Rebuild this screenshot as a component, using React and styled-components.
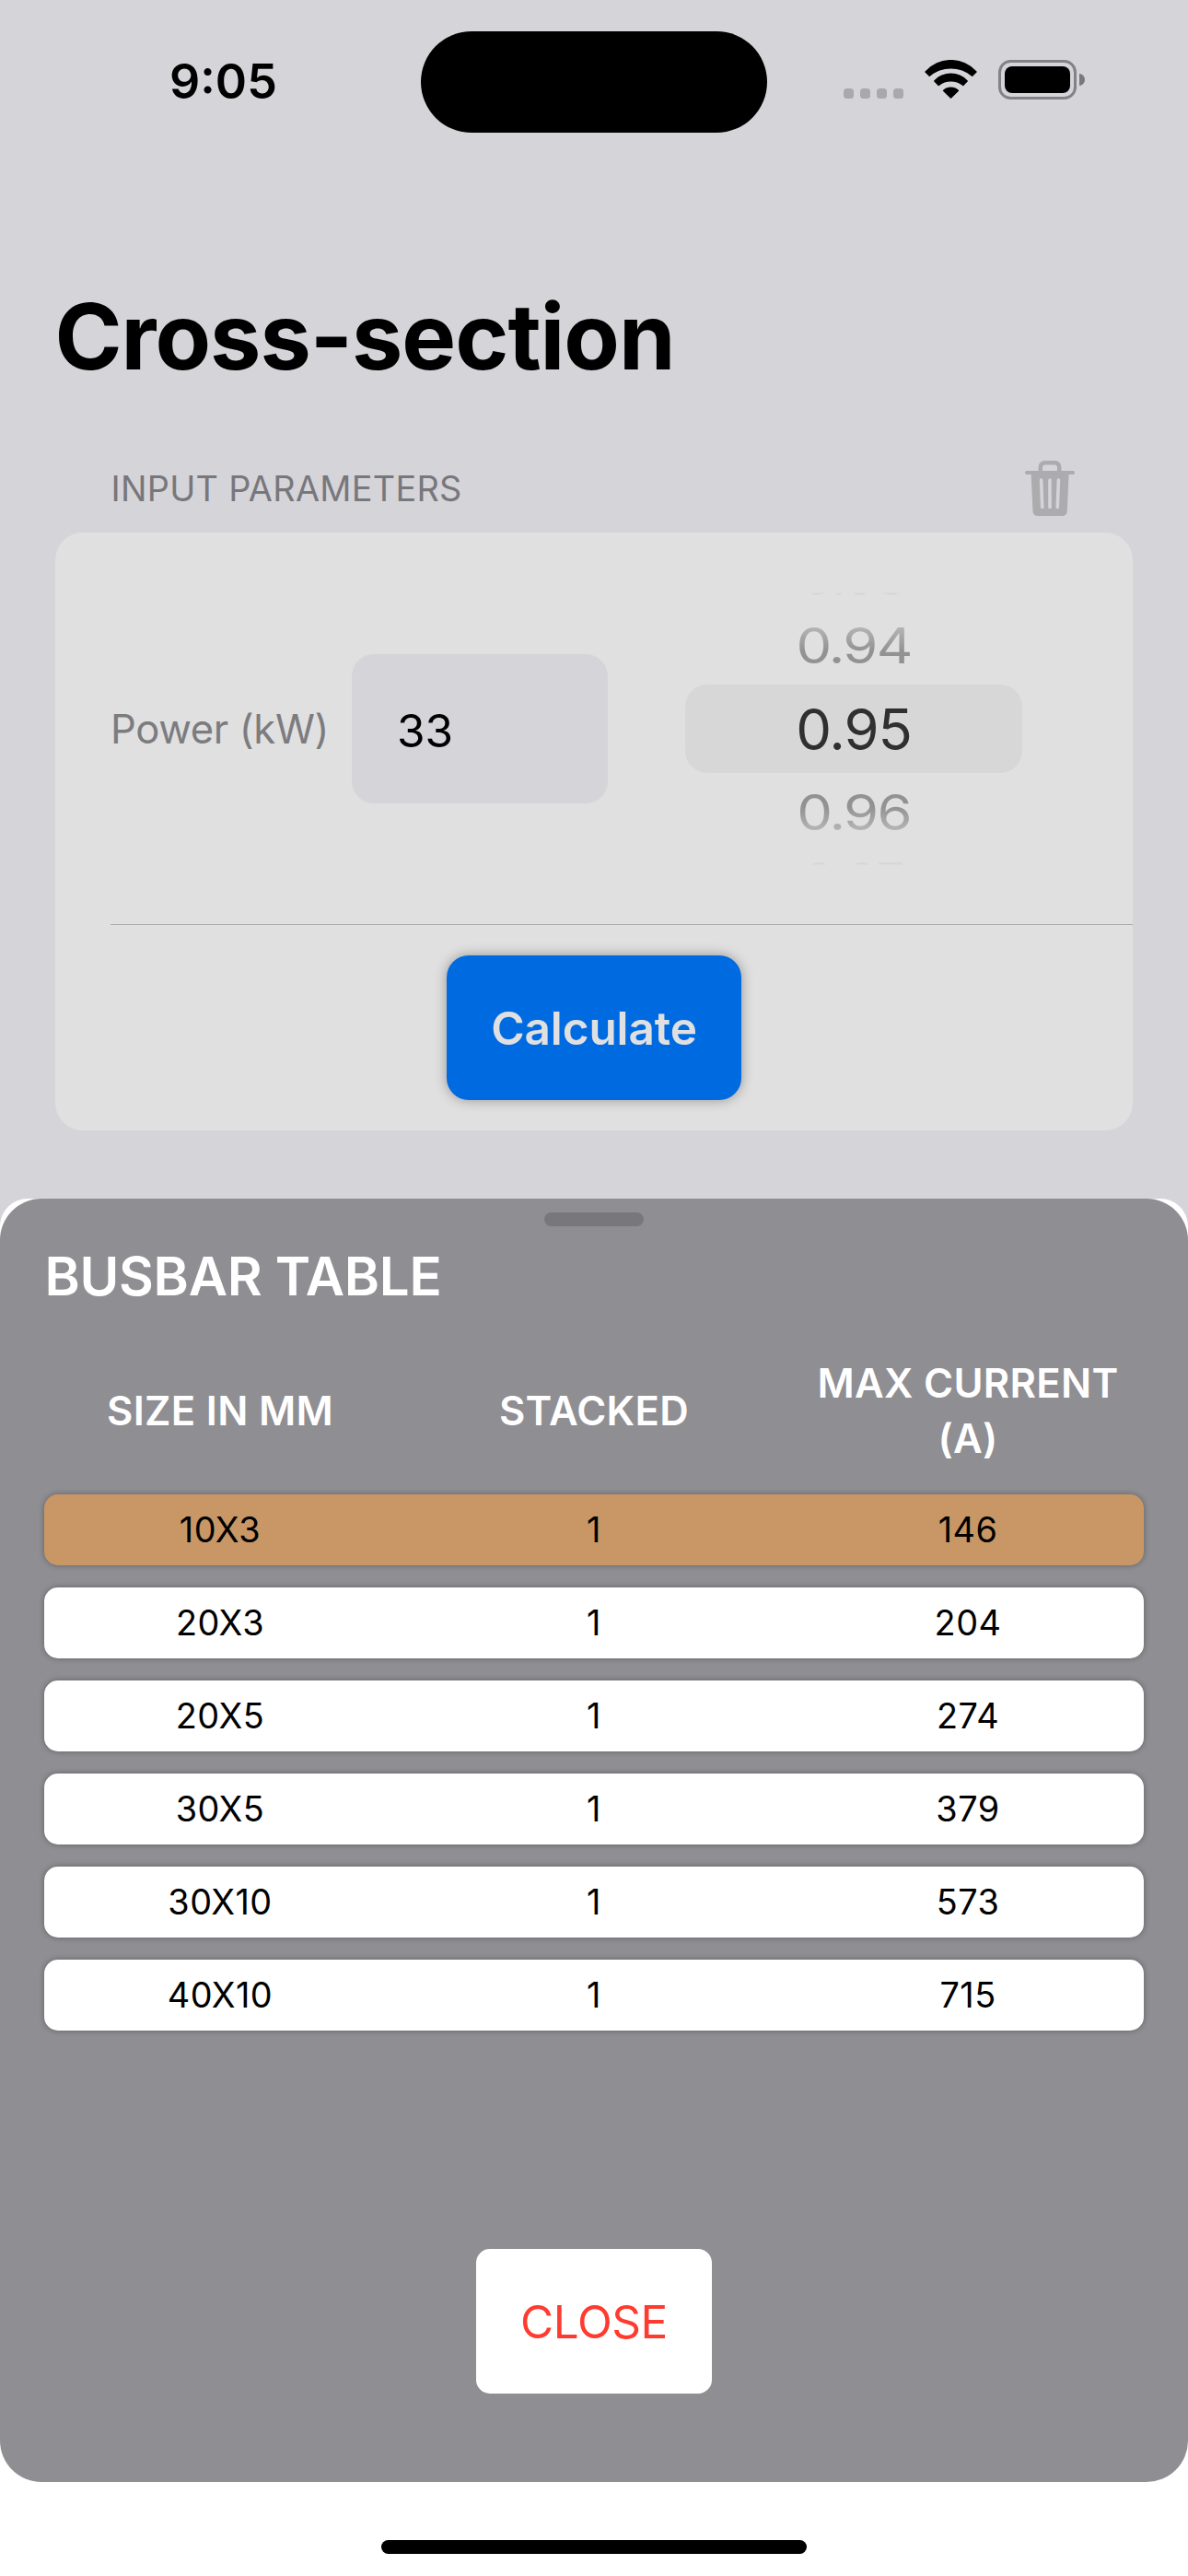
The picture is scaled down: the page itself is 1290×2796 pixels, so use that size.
import React from "react";
import styled, { createGlobalStyle } from "styled-components";

const GlobalStyle = createGlobalStyle`
  * { box-sizing: border-box; }
  body { margin: 0; background: #d5d4d9; }
  button { border: 0; margin: 0; padding: 0; font-family: inherit; }
`;

const Screen = styled.main`
  width: 1290px;
  height: 2796px;
  display: flex;
  flex-direction: column;
  background: #d5d4d9;
  color: #000;
  font-family: Inter, "Liberation Sans", sans-serif;
  white-space: nowrap;
  overflow: hidden;
`;

/* ---------- status bar ---------- */

const StatusBar = styled.header`
  height: 177px;
  flex: none;
  display: grid;
  grid-template-columns: 457px 376px 457px;
`;

const Clock = styled.time`
  padding: 59px 0 0 184px;
  font-size: 52px;
  font-weight: 600;
  line-height: 60px;
`;

const Island = styled.div`
  height: 110px;
  margin-top: 34px;
  border-radius: 55px;
  background: #000;
`;

const StatusIcons = styled.div`
  display: flex;
  align-items: flex-start;
  padding: 65px 0 0 83px;
`;

const SignalDots = styled.div`
  display: flex;
  gap: 7px;
  width: 88px;
  padding-top: 31px;
`;

const Dot = styled.i`
  width: 11px;
  height: 11px;
  border-radius: 3.5px;
  background: #a9a8ad;
`;

const BatteryIcon = styled.svg`
  margin-left: 23px;
`;

/* ---------- form ---------- */

const Title = styled.h1`
  margin: 128px 0 0 59.5px;
  height: 120px;
  font-size: 98.9px;
  font-weight: 700;
  line-height: 120px;
  letter-spacing: -1.03px;
`;

const SectionHeader = styled.div`
  display: flex;
  justify-content: space-between;
  height: 78px;
  margin-top: 75px;
  padding: 0 123px 0 120.5px;
`;

const SectionLabel = styled.h2`
  margin: 10px 0 0;
  font-size: 37.8px;
  font-weight: 400;
  line-height: 40px;
  letter-spacing: 0.3px;
  color: #78777c;
`;

const Card = styled.section`
  width: 1170px;
  height: 649px;
  margin-left: 60px;
  border-radius: 30px;
  background: #e0e0e0;
`;

const InputRow = styled.div`
  display: grid;
  grid-template-columns: 262px 278px 366px;
  align-items: center;
  height: 426px;
  margin-left: 60px;
  border-bottom: 1px solid #acacae;
`;

const FieldLabel = styled.label`
  padding-top: 2px;
  font-size: 43.6px;
  line-height: 52px;
  letter-spacing: -0.36px;
  color: #7c7c80;
`;

const Field = styled.div`
  height: 162px;
  padding: 3px 0 0 49px;
  border-radius: 24px;
  background: #d5d4d9;
  font-size: 49.5px;
  line-height: 161px;
`;

const Wheel = styled.div`
  display: flex;
  flex-direction: column;
  width: 366px;
  height: 300px;
  margin-left: 84px;
  text-align: center;
`;

const WheelEdge = styled.div`
  display: flex;
  flex: none;
  justify-content: center;
  align-items: ${(p) => (p.$bottom ? "flex-start" : "flex-end")};
  height: 17px;
  padding: ${(p) => (p.$bottom ? "11px 0 0" : "0 0 11px")};
`;

const EdgeText = styled.span`
  padding: 1px 0;
  font-size: 55px;
  line-height: 40px;
  letter-spacing: -0.8px;
  color: transparent;
  background: ${(p) =>
    p.$bottom
      ? "linear-gradient(#d7d7d7 3px, transparent 4px)"
      : "linear-gradient(to top, #d7d7d7 3px, transparent 4px)"};
  background-clip: text;
`;

const WheelOption = styled.div`
  height: 85px;
  flex: none;
  font-size: 61.5px;
  line-height: 85px;
  letter-spacing: -1.8px;
  transform: scaleY(0.86);
  color: transparent;
  background: ${(p) =>
    p.$below
      ? "linear-gradient(#929292 42%, #b6b6b6 78%)"
      : "linear-gradient(#b6b6b6 22%, #929292 58%)"};
  background-clip: text;
`;

const WheelSelected = styled.div`
  height: 96px;
  flex: none;
  border-radius: 24px;
  background: #d7d7d7;
  color: #303030;
  font-size: 61.5px;
  line-height: 97px;
  letter-spacing: -1.12px;
`;

const CalculateButton = styled.button`
  display: block;
  width: 320px;
  height: 157px;
  margin: 33px auto 0;
  border-radius: 24px;
  background: #006be0;
  box-shadow: 0 0 13px rgba(0, 0, 0, 0.34);
  color: #e0e0e2;
  font-size: 49.5px;
  font-weight: 560;
  letter-spacing: -0.1px;
`;

/* ---------- bottom sheet ---------- */

const Sheet = styled.section`
  height: 1495px;
  flex: none;
  margin-top: 74px;
  border-radius: 30px 30px 0 0;
  background: #fff;
`;

const Panel = styled.div`
  display: flex;
  flex-direction: column;
  height: 1393px;
  padding: 15px 48px 0;
  border-radius: 45px;
  background: #8f8e93;
`;

const Grabber = styled.div`
  width: 108px;
  height: 15px;
  margin: 0 auto;
  border-radius: 8px;
  background: #78777c;
`;

const SheetTitle = styled.h2`
  margin: 19px 0 0 0.5px;
  font-size: 58.2px;
  font-weight: 560;
  line-height: 70px;
  letter-spacing: -0.3px;
  color: #fff;
`;

const Columns = styled.div`
  display: grid;
  grid-template-columns: repeat(3, 382px);
  column-gap: 24px;
  align-items: center;
  text-align: center;
`;

const TableHead = styled(Columns)`
  height: 120px;
  margin-top: 52px;
  color: #fff;
  font-size: 43.6px;
  font-weight: 560;
  line-height: 60px;
  letter-spacing: 0.3px;
`;

const HeadCell = styled.div`
  white-space: normal;
`;

const Rows = styled.div`
  display: grid;
  row-gap: 24px;
  margin-top: 30px;
`;

const Row = styled(Columns)`
  height: 77px;
  border-radius: 15px;
  background: ${(p) => (p.$highlighted ? "#c99765" : "#fff")};
  box-shadow: 0 0 6px rgba(0, 0, 0, 0.33);
  font-size: 37.8px;
  line-height: 77px;
  letter-spacing: 0.5px;
`;

const CloseButton = styled.button`
  display: block;
  width: 256px;
  height: 157px;
  margin: 237px auto 0;
  border-radius: 15px;
  background: #fff;
  color: #ff3b30;
  font-size: 49.5px;
  letter-spacing: -0.46px;
`;

const HomeIndicator = styled.div`
  width: 462px;
  height: 15px;
  margin: 63px auto 0;
  border-radius: 8px;
  background: #000;
`;

const busbars = [
  { size: "10X3", stacked: 1, current: 146 },
  { size: "20X3", stacked: 1, current: 204 },
  { size: "20X5", stacked: 1, current: 274 },
  { size: "30X5", stacked: 1, current: 379 },
  { size: "30X10", stacked: 1, current: 573 },
  { size: "40X10", stacked: 1, current: 715 },
];

function Wifi() {
  return (
    <svg width="57" height="42" viewBox="0 0 57 42" aria-hidden="true">
      <path d="M0.5 12.4A37.7 37.7 0 0 1 56.5 12.4Q57 13 56.5 13.5L52.2 17.8Q51.7 18.3 51.2 17.8A35 35 0 0 0 5.8 17.8Q5.3 18.3 4.8 17.8L0.5 13.5Q0 13 0.5 12.4Z" />
      <path d="M10.3 22.4A25 25 0 0 1 46.7 22.4Q47.2 23 46.7 23.5L42.3 27.9Q41.8 28.4 41.3 27.9A21 21 0 0 0 15.7 27.9Q15.2 28.4 14.7 27.9L10.3 23.5Q9.8 23 10.3 22.4Z" />
      <path d="M20.2 32.7A12.5 12.5 0 0 1 36.8 32.7Q37.4 33.3 36.8 33.9L29.1 41.5Q28.5 42.1 27.9 41.5L20.2 33.9Q19.6 33.3 20.2 32.7Z" />
    </svg>
  );
}

function Battery() {
  return (
    <BatteryIcon width="95" height="43" viewBox="0 0 95 43" aria-hidden="true">
      <rect x="1.5" y="1.5" width="82" height="40" rx="12" fill="none" stroke="#838286" strokeWidth="3" />
      <rect x="7" y="7" width="71" height="29" rx="8" fill="#000" />
      <path d="M88 15A6 6.5 0 0 1 88 28Z" fill="#79787c" />
    </BatteryIcon>
  );
}

function Trash() {
  return (
    <svg width="54" height="60" viewBox="0 0 54 60" aria-label="Clear">
      <g fill="none" stroke="#acacae" strokeLinecap="round">
        <path d="M2 13H52" strokeWidth="4" />
        <path d="M16.8 13V7.5Q16.8 2.2 22 2.2H32Q37.2 2.2 37.2 7.5V13" strokeWidth="4.4" />
      </g>
      <path d="M6.6 14H47.6L45.8 54.5Q45.5 60 40 60H14.2Q8.8 60 8.5 54.5Z" fill="#acacae" />
      <path d="M17.6 21L18.7 50.5M27 21V50.5M36.4 21L35.3 50.5" fill="none" stroke="#d5d4d9" strokeWidth="3.6" strokeLinecap="round" />
    </svg>
  );
}

export default function App() {
  return (
    <Screen>
      <GlobalStyle />
      <StatusBar>
        <Clock>9:05</Clock>
        <Island />
        <StatusIcons>
          <SignalDots>
            <Dot />
            <Dot />
            <Dot />
            <Dot />
          </SignalDots>
          <Wifi />
          <Battery />
        </StatusIcons>
      </StatusBar>

      <Title>Cross-section</Title>

      <SectionHeader>
        <SectionLabel>INPUT PARAMETERS</SectionLabel>
        <Trash />
      </SectionHeader>

      <Card>
        <InputRow>
          <FieldLabel>Power (kW)</FieldLabel>
          <Field>33</Field>
          <Wheel>
            <WheelEdge>
              <EdgeText>0.93</EdgeText>
            </WheelEdge>
            <WheelOption>0.94</WheelOption>
            <WheelSelected>0.95</WheelSelected>
            <WheelOption $below>0.96</WheelOption>
            <WheelEdge $bottom>
              <EdgeText $bottom>0.97</EdgeText>
            </WheelEdge>
          </Wheel>
        </InputRow>
        <CalculateButton>Calculate</CalculateButton>
      </Card>

      <Sheet>
        <Panel>
          <Grabber />
          <SheetTitle>BUSBAR TABLE</SheetTitle>
          <TableHead>
            <HeadCell>SIZE IN MM</HeadCell>
            <HeadCell>STACKED</HeadCell>
            <HeadCell>MAX CURRENT (A)</HeadCell>
          </TableHead>
          <Rows>
            {busbars.map((bar, index) => (
              <Row key={bar.size} $highlighted={index === 0}>
                <span>{bar.size}</span>
                <span>{bar.stacked}</span>
                <span>{bar.current}</span>
              </Row>
            ))}
          </Rows>
          <CloseButton>CLOSE</CloseButton>
        </Panel>
        <HomeIndicator />
      </Sheet>
    </Screen>
  );
}
